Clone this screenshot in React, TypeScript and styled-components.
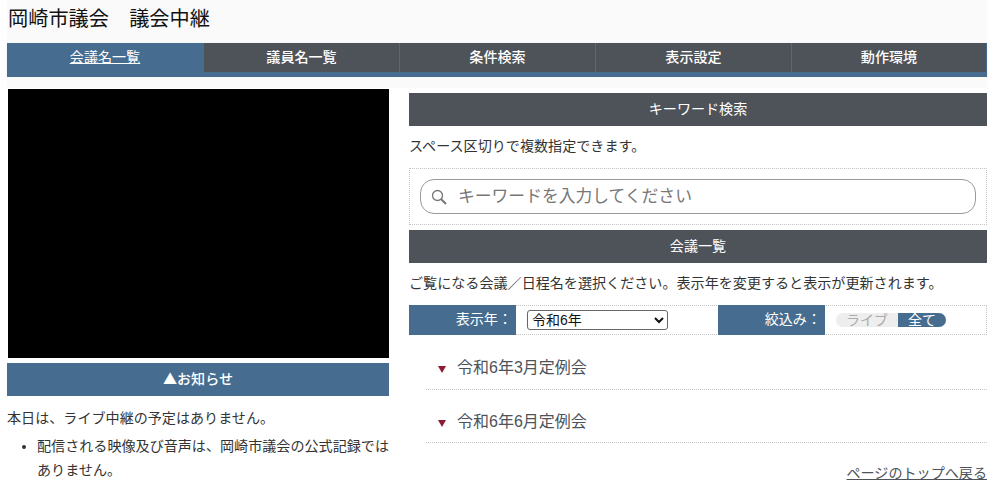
import React from "react";
import styled, { createGlobalStyle } from "styled-components";

const GlobalStyle = createGlobalStyle`
  html, body {
    margin: 0;
    padding: 0;
    background: #fff;
    height: 493px;
    overflow: hidden;
  }
  body {
    font-family: "Liberation Sans", "Noto Sans CJK JP", sans-serif;
    color: #333;
    font-size: 14.08px;
  }
`;

const blue = "#466d90";
const slate = "#4e5359";

const Page = styled.div`
  width: 980px;
  margin-left: 7px;
`;

const Header = styled.header`
  height: 43px;
  background: #fafafa;
`;

const SiteTitle = styled.h1`
  margin: 0;
  padding-left: 1px;
  font-size: 20.2px;
  font-weight: 400;
  line-height: 38px;
  color: #111;
`;

const Nav = styled.nav`
  display: flex;
  height: 29px;
  background: ${slate};
  border-bottom: 5px solid ${blue};
  box-shadow: 0 1px 2px rgba(0, 0, 0, 0.12);
`;

const NavItem = styled.a<{ $active?: boolean }>`
  flex: 0 0 196px;
  box-sizing: border-box;
  text-align: center;
  font-size: 14.08px;
  font-weight: ${(p) => (p.$active ? 400 : 500)};
  line-height: 28px;
  color: #fff;
  background: ${(p) => (p.$active ? blue : "transparent")};
  text-decoration: ${(p) => (p.$active ? "underline" : "none")};
  border-right: 1px solid ${blue};
  &:first-child {
    flex-basis: 197px;
  }
  &:last-child {
    flex: 1;
  }
`;

const NavGap = styled.div`
  height: 11px;
  background: #fafafa;
`;

const Columns = styled.div`
  display: flex;
  gap: 20px;
  margin-top: 1px;
`;

const Left = styled.section`
  width: 382px;
  flex: none;
`;

const Video = styled.div`
  height: 269px;
  margin-left: 1px;
  background: #000;
`;

const NoticeBar = styled.div`
  margin-top: 5px;
  height: 33px;
  line-height: 30px;
  text-align: center;
  color: #fff;
  font-family: "Noto Sans CJK JP", sans-serif;
  font-weight: 500;
  font-size: 14.08px;
  background: ${blue};
`;

const Para = styled.p`
  margin: 14px 0 0;
  line-height: 17px;
  color: #333;
`;

const Notes = styled.ul`
  margin: 7px 0 0;
  padding-left: 30px;
  line-height: 24px;
  color: #333;
`;

const Right = styled.section`
  width: 578px;
  flex: none;
  padding-top: 4px;
`;

const Band = styled.h2`
  margin: 0;
  height: 33px;
  line-height: 33px;
  text-align: center;
  color: #fff;
  font-size: 14.08px;
  font-weight: 400;
  background: ${slate};
`;

const Hint = styled.p`
  margin: 0;
  height: 42px;
  line-height: 40px;
  color: #333;
`;

const SearchBox = styled.div`
  height: 57px;
  margin-bottom: 5px;
  padding: 10px;
  box-sizing: border-box;
  border: 1px dotted #c4c4c4;
`;

const SearchField = styled.div`
  display: flex;
  align-items: center;
  height: 35px;
  box-sizing: border-box;
  padding: 0 10px;
  gap: 11px;
  border: 1px solid #9a9a9a;
  border-radius: 14px;
  background: #fff;
`;

const SearchInput = styled.input`
  flex: 1;
  border: 0;
  outline: 0;
  padding: 0;
  background: transparent;
  font-family: inherit;
  font-size: 16.8px;
  &::placeholder {
    color: #777;
    opacity: 1;
  }
`;

const FilterRow = styled.div`
  display: flex;
  height: 30px;
  gap: 50px;
  box-sizing: border-box;
  border: 1px dotted #c4c4c4;
`;

const FilterCell = styled.div`
  display: flex;
  align-items: center;
  width: 259px;
  flex: none;
  &:last-child {
    flex: 1;
  }
`;

const FilterLabel = styled.div`
  width: 107px;
  height: 30px;
  margin: 0 0 0 -1px;
  flex: none;
  box-sizing: border-box;
  padding-right: 4px;
  text-align: right;
  line-height: 28px;
  color: #fff;
  background: ${blue};
`;

const YearSelect = styled.select`
  margin-left: 11px;
  width: 141px;
  height: 20px;
  font-family: inherit;
  font-size: 14px;
  color: #111;
  background: #fff;
  border: 1px solid #666;
  border-radius: 3px;
`;

const Toggle = styled.div`
  display: flex;
  margin-left: 11px;
  height: 14px;
  width: 110px;
  border-radius: 7px;
  overflow: hidden;
`;

const ToggleOption = styled.span<{ $on?: boolean }>`
  flex: ${(p) => (p.$on ? "0 0 48px" : "0 0 62px")};
  text-align: center;
  font-size: 14px;
  line-height: 14px;
  color: ${(p) => (p.$on ? "#fff" : "#aaa")};
  background: ${(p) => (p.$on ? blue : "#eee")};
`;

const MeetingList = styled.ul`
  list-style: none;
  margin: 0;
  padding: 0 0 0 17px;
`;

const Meeting = styled.li`
  display: flex;
  align-items: center;
  gap: 11px;
  height: 53px;
  box-sizing: border-box;
  padding: 8px 0 0 12px;
  border-bottom: 1px dotted #c4c4c4;
  font-size: 16px;
  color: #4e5359;
  &:first-child {
    height: 55px;
  }
`;

const Caret = styled.span`
  width: 0;
  height: 0;
  margin-top: 6px;
  border-left: 4px solid transparent;
  border-right: 4px solid transparent;
  border-top: 7px solid #8d1c33;
`;

const TopLink = styled.a`
  display: block;
  margin-top: 20px;
  text-align: right;
  line-height: 20px;
  color: #4e5359;
  text-decoration: underline;
`;

const meetings = ["令和6年3月定例会", "令和6年6月定例会"];
const tabs = ["会議名一覧", "議員名一覧", "条件検索", "表示設定", "動作環境"];

export default function App() {
  return (
    <>
      <GlobalStyle />
      <Page>
        <Header>
          <SiteTitle>岡崎市議会　議会中継</SiteTitle>
        </Header>
        <Nav>
          {tabs.map((t, i) => (
            <NavItem key={t} $active={i === 0}>
              {t}
            </NavItem>
          ))}
        </Nav>
        <NavGap />
        <Columns>
          <Left>
            <Video />
            <NoticeBar>▲お知らせ</NoticeBar>
            <Para>本日は、ライブ中継の予定はありません。</Para>
            <Notes>
              <li>配信される映像及び音声は、岡崎市議会の公式記録ではありません。</li>
            </Notes>
          </Left>
          <Right>
            <Band>キーワード検索</Band>
            <Hint>スペース区切りで複数指定できます。</Hint>
            <SearchBox>
              <SearchField>
                <svg width="16" height="16" viewBox="0 0 16 16" fill="none" stroke="#777" strokeWidth="1.3">
                  <circle cx="6.5" cy="6.5" r="5" />
                  <path d="M10.2 10.2 15 15" strokeWidth="2" />
                </svg>
                <SearchInput placeholder="キーワードを入力してください" />
              </SearchField>
            </SearchBox>
            <Band>会議一覧</Band>
            <Hint>ご覧になる会議／日程名を選択ください。表示年を変更すると表示が更新されます。</Hint>
            <FilterRow>
              <FilterCell>
                <FilterLabel>表示年：</FilterLabel>
                <YearSelect defaultValue="令和6年">
                  <option>令和6年</option>
                </YearSelect>
              </FilterCell>
              <FilterCell>
                <FilterLabel>絞込み：</FilterLabel>
                <Toggle>
                  <ToggleOption>ライブ</ToggleOption>
                  <ToggleOption $on>全て</ToggleOption>
                </Toggle>
              </FilterCell>
            </FilterRow>
            <MeetingList>
              {meetings.map((m) => (
                <Meeting key={m}>
                  <Caret />
                  {m}
                </Meeting>
              ))}
            </MeetingList>
            <TopLink>ページのトップへ戻る</TopLink>
          </Right>
        </Columns>
      </Page>
    </>
  );
}
